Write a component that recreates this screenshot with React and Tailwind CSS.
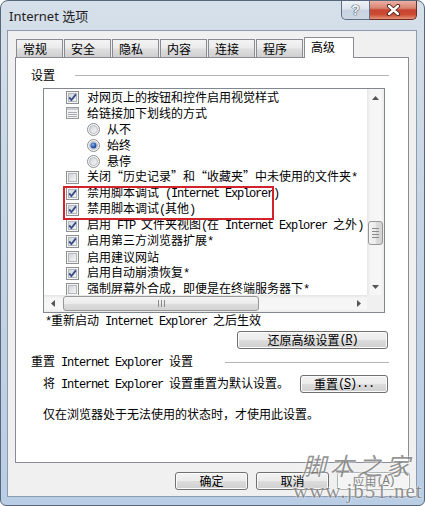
import React from "react";

// latin text in the dialog is drawn half-width, like SimSun
function M({ children, u }) {
  return (
    <span className={`font-['Liberation_Mono',monospace] text-[12px] tracking-[-1.2px] ${u ? "underline" : ""}`}>
      {children}
    </span>
  );
}

function CheckBox({ on }) {
  return (
    <svg width="13" height="13" viewBox="0 0 13 13" className="shrink-0">
      <defs>
        <linearGradient id="cbIn" x1="0" y1="0" x2="1" y2="1">
          <stop offset="0" stopColor="#cfd3d8" />
          <stop offset="1" stopColor="#f7f7f7" />
        </linearGradient>
      </defs>
      <rect x="0.5" y="0.5" width="12" height="12" fill="#f5f5f5" stroke="#8e8f8f" />
      <rect x="2.5" y="2.5" width="8" height="8" fill="url(#cbIn)" stroke="#b3b8be" />
      {on && <path d="M3.2 6.4 L5.4 9 L9.9 3.3" fill="none" stroke="#3b4e8d" strokeWidth="1.9" />}
    </svg>
  );
}

function Radio({ on }) {
  return (
    <svg width="13" height="13" viewBox="0 0 13 13" className="shrink-0">
      <defs>
        <linearGradient id="rdIn" x1="0" y1="0" x2="1" y2="1">
          <stop offset="0" stopColor="#cfd3d8" />
          <stop offset="1" stopColor="#f7f7f7" />
        </linearGradient>
        <radialGradient id="rdDot" cx="0.4" cy="0.35" r="0.7">
          <stop offset="0" stopColor="#8fb6ec" />
          <stop offset="0.6" stopColor="#2a5bb0" />
          <stop offset="1" stopColor="#1b3f86" />
        </radialGradient>
      </defs>
      <circle cx="6.5" cy="6.5" r="6" fill="#f5f5f5" stroke="#8e8f8f" />
      <circle cx="6.5" cy="6.5" r="4" fill="url(#rdIn)" stroke="#b9bec4" />
      {on && <circle cx="6.5" cy="6.5" r="3" fill="url(#rdDot)" />}
    </svg>
  );
}

function GroupIcon() {
  return (
    <svg width="13" height="12" viewBox="0 0 13 12" className="shrink-0">
      <rect x="0.5" y="0.5" width="12" height="11" fill="#f1f1f1" stroke="#9a9a9a" />
      <rect x="1" y="1" width="11" height="2" fill="#c9ced6" />
      <path d="M2 5.5H11M2 7.5H11M2 9.5H11" stroke="#a9adb3" />
    </svg>
  );
}

function Arrow({ dir }) {
  const d = {
    up: "M0 4 L3.5 0 L7 4 Z",
    down: "M0 0 L3.5 4 L7 0 Z",
    left: "M4 0 L0 3.5 L4 7 Z",
    right: "M0 0 L4 3.5 L0 7 Z",
  }[dir];
  const vert = dir === "up" || dir === "down";
  return (
    <svg width={vert ? 7 : 4} height={vert ? 4 : 7} viewBox={vert ? "0 0 7 4" : "0 0 4 7"}>
      <path d={d} fill="#545454" />
    </svg>
  );
}

const rows = [
  { kind: "check", on: true, text: "对网页上的按钮和控件启用视觉样式" },
  { kind: "group", text: "给链接加下划线的方式" },
  { kind: "radio", on: false, text: "从不" },
  { kind: "radio", on: true, text: "始终" },
  { kind: "radio", on: false, text: "悬停" },
  { kind: "check", on: false, text: <>关闭“历史记录”和“收藏夹”中未使用的文件夹<M>*</M></> },
  { kind: "check", on: true, text: <>禁用脚本调试<M> (Internet Explorer)</M></> },
  { kind: "check", on: true, text: <>禁用脚本调试<M>(</M>其他<M>)</M></> },
  { kind: "check", on: true, text: <>启用<M> FTP </M>文件夹视图<M>(</M>在<M> Internet Explorer </M>之外<M>)</M></> },
  { kind: "check", on: true, text: <>启用第三方浏览器扩展<M>*</M></> },
  { kind: "check", on: false, text: "启用建议网站" },
  { kind: "check", on: true, text: <>启用自动崩溃恢复<M>*</M></> },
  { kind: "check", on: false, text: <>强制屏幕外合成，即便是在终端服务器下<M>*</M></> },
];

function ListRow({ row }) {
  if (row.kind === "radio") {
    return (
      <div className="flex h-[16px] items-center gap-[7px] whitespace-nowrap pl-[43px]">
        <Radio on={row.on} />
        <span>{row.text}</span>
      </div>
    );
  }
  return (
    <div className="flex h-[16px] items-center gap-[8px] whitespace-nowrap pl-[22px]">
      {row.kind === "group" ? <GroupIcon /> : <CheckBox on={row.on} />}
      <span>{row.text}</span>
    </div>
  );
}

function ListBox() {
  return (
    <div className="ml-[27px] mt-[5px] flex h-[225px] w-[342px] flex-col border border-[#828790] bg-white">
      <div className="flex h-[206px]">
        <div className="relative w-[323px] overflow-hidden">
          {rows.map((r, i) => (
            <ListRow key={i} row={r} />
          ))}
          <div className="absolute left-[19px] top-[97px] h-[34px] w-[211px] border-2 border-[#d2232b]" />
        </div>
        <div className="flex w-[17px] flex-col bg-[linear-gradient(90deg,#e6e6e6,#f5f5f5_20%,#f7f7f7_80%,#ececec)]">
          <div className="flex h-[17px] items-center justify-center">
            <Arrow dir="up" />
          </div>
          <div className="mx-[1px] mt-[115px] flex h-[24px] w-[15px] flex-col items-center justify-center gap-[2px] rounded-[3px] border border-[#979797] bg-[linear-gradient(90deg,#f4f4f4,#ebebeb_50%,#dedede_51%,#d3d3d3)]">
            <div className="h-px w-[7px] bg-[#8b8b8b]" />
            <div className="h-px w-[7px] bg-[#8b8b8b]" />
            <div className="h-px w-[7px] bg-[#8b8b8b]" />
            <div className="h-px w-[7px] bg-[#8b8b8b]" />
          </div>
          <div className="mt-auto flex h-[17px] items-center justify-center">
            <Arrow dir="down" />
          </div>
        </div>
      </div>
      <div className="flex h-[17px]">
        <div className="flex w-[323px] items-center bg-[linear-gradient(180deg,#e6e6e6,#f5f5f5_20%,#f7f7f7_80%,#ececec)]">
          <div className="flex h-[17px] w-[17px] items-center justify-center">
            <Arrow dir="left" />
          </div>
          <div className="ml-[2px] flex h-[15px] w-[196px] items-center justify-center gap-[2px] rounded-[3px] border border-[#979797] bg-[linear-gradient(180deg,#f4f4f4,#ebebeb_50%,#dedede_51%,#d3d3d3)]">
            <div className="h-[7px] w-px bg-[#8b8b8b]" />
            <div className="h-[7px] w-px bg-[#8b8b8b]" />
            <div className="h-[7px] w-px bg-[#8b8b8b]" />
          </div>
          <div className="ml-auto flex h-[17px] w-[17px] items-center justify-center">
            <Arrow dir="right" />
          </div>
        </div>
        <div className="w-[17px] bg-[#f0f0f0]" />
      </div>
    </div>
  );
}

function Button({ children, className = "" }) {
  return (
    <div
      className={`flex h-[18px] items-center justify-center whitespace-nowrap rounded-[3px] border border-[#707070] bg-[linear-gradient(180deg,#f2f2f2_0%,#ebebeb_49%,#dddddd_50%,#cfcfcf_100%)] shadow-[inset_0_0_0_1px_#fbfbfb] ${className}`}
    >
      {children}
    </div>
  );
}

function GroupHeader({ children, className = "", lineClass = "" }) {
  return (
    <div className={`flex h-[16px] items-center pl-[15px] pr-[19px] ${className}`}>
      <span className="whitespace-nowrap">{children}</span>
      <div className={`h-px flex-1 bg-[#b4b4b4] ${lineClass}`} />
    </div>
  );
}

const tabs = ["常规", "安全", "隐私", "内容", "连接", "程序"];

export default function App() {
  return (
    <div className="relative h-[506px] w-[425px] overflow-hidden rounded-t-[8px] rounded-b-[6px] border border-[#56667b] bg-[linear-gradient(180deg,#d6e0ea_0%,#c9d6e4_35%,#b9cde4_100%)] font-['Noto_Sans_CJK_SC',sans-serif] text-[12px] leading-[14px] text-black">
      {/* title bar */}
      <div className="flex h-[29px] items-start justify-between">
        <div className="pl-[8px] pt-[6px] font-['Noto_Sans','Noto_Sans_CJK_SC',sans-serif] text-[13px] leading-[18px] text-[#1e1e1e]">
          Internet 选项
        </div>
        <div className="mr-[7px] flex">
          <div className="flex h-[19px] w-[29px] items-center justify-center rounded-bl-[5px] border border-t-0 border-[#5d6f86] bg-[linear-gradient(180deg,#eef2f6_0%,#dde4ec_45%,#c8d3df_50%,#ccd7e3_100%)] font-['Liberation_Sans',sans-serif] text-[14px] font-bold text-[#f4f6f8] [text-shadow:0_0_1px_#3d4957,0_0_1px_#3d4957,0_0_1px_#3d4957]">
            ?
          </div>
          <div className="flex h-[19px] w-[47px] items-center justify-center rounded-br-[5px] border border-l-0 border-t-0 border-[#6e2b22] bg-[linear-gradient(180deg,#eab1a3_0%,#d98270_40%,#c74330_50%,#cc4b33_75%,#e3957a_100%)]">
            <svg width="15" height="12" viewBox="0 0 15 12">
              <path d="M3 2 L12 10 M12 2 L3 10" stroke="#4a2019" strokeWidth="4.2" strokeLinecap="round" />
              <path d="M3 2 L12 10 M12 2 L3 10" stroke="#ffffff" strokeWidth="2.4" strokeLinecap="round" />
            </svg>
          </div>
        </div>
      </div>

      {/* client area */}
      <div className="ml-[6px] flex h-[467px] w-[410px] flex-col border border-[#8c9cb0] bg-[#f0f0f0] pt-[6px]">
        <div className="ml-[8px] flex h-[20px] items-end gap-[1px]">
          {tabs.map((t) => (
            <div
              key={t}
              className="flex h-[18px] w-[47px] items-center border border-b-0 border-[#898c95] bg-[linear-gradient(180deg,#f3f3f3_0%,#ebebeb_45%,#dddddd_55%,#cfcfcf_100%)] pl-[6px]"
            >
              {t}
            </div>
          ))}
          <div className="relative z-10 -mb-px flex h-[21px] w-[50px] items-center border border-b-0 border-[#898c95] bg-white pl-[6px] pb-[2px]">
            高级
          </div>
        </div>

        <div className="ml-[7px] flex h-[406px] w-[394px] flex-col border border-[#898c95] bg-white">
          <GroupHeader className="mt-[9px]" lineClass="ml-[20px]">
            设置
          </GroupHeader>
          <ListBox />
          <div className="ml-[29px] h-[14px] whitespace-nowrap">
            <M>*</M>重新启动<M> Internet Explorer </M>之后生效
          </div>
          <Button className="mr-[20px] mt-[4px] w-[151px] self-end">
            还原高级设置<M>(</M>
            <M u>R</M>
            <M>)</M>
          </Button>
          <GroupHeader className="mt-[5px]" lineClass="ml-[32px]">
            重置<M> Internet Explorer </M>设置
          </GroupHeader>
          <div className="mt-[5px] flex h-[18px] items-center justify-between pl-[27px] pr-[20px]">
            <span className="whitespace-nowrap">
              将<M> Internet Explorer </M>设置重置为默认设置。
            </span>
            <Button className="w-[88px]">
              重置<M>(</M>
              <M u>S</M>
              <M>)...</M>
            </Button>
          </div>
          <div className="ml-[27px] mt-[14px] h-[14px] whitespace-nowrap">
            仅在浏览器处于无法使用的状态时，才使用此设置。
          </div>
        </div>

        <div className="mt-[9px] flex justify-end gap-[8px] pr-[6px]">
          <Button className="w-[73px] border-[#3c7fb1] bg-[linear-gradient(180deg,#eaf6fd_0%,#d9f0fc_49%,#bee6fd_50%,#a7d9f5_100%)] shadow-[inset_0_0_0_1px_#9fdcf6]">
            确定
          </Button>
          <Button className="w-[73px]">取消</Button>
          <Button className="w-[73px] border-[#adb2b5] bg-[linear-gradient(180deg,#f4f4f4,#f4f4f4)] text-[#838383]">
            应用<M>(</M>
            <M u>A</M>
            <M>)</M>
          </Button>
        </div>
      </div>

      {/* site watermark */}
      <div className="pointer-events-none absolute left-[292px] top-[450px] flex flex-col items-center text-[#7b7b7b] opacity-80 [text-shadow:0_0_2px_#ffffff,0_0_2px_#ffffff]">
        <span className="text-[24px] leading-[28px] tracking-[4px] italic">脚本之家</span>
        <span className="font-['Liberation_Serif',serif] text-[21px] leading-[24px] tracking-[1px]">www.jb51.net</span>
      </div>
    </div>
  );
}
